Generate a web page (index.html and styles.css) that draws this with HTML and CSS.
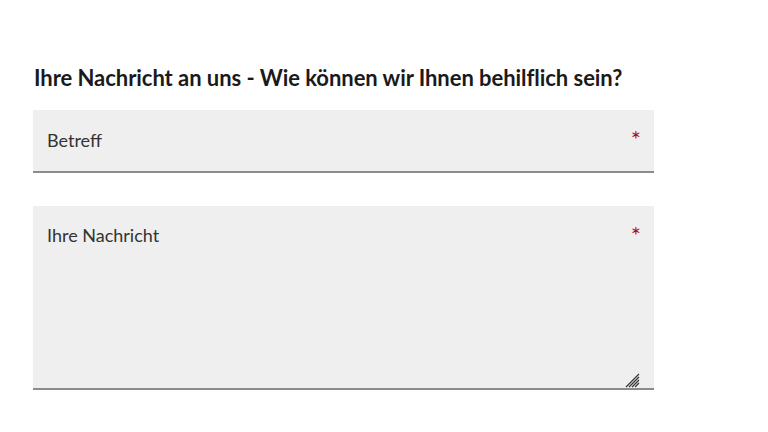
FILE: index.html
```html
<!DOCTYPE html>
<html lang="de">
<head>
  <meta charset="UTF-8" />
  <meta name="viewport" content="width=device-width, initial-scale=1.0" />
  <title>Kontakt</title>
  <link rel="stylesheet" href="styles.css">
</head>
<body>
  <form class="kontakt">
    <h2>Ihre Nachricht an uns - Wie können wir Ihnen behilflich sein?</h2>
    <div class="feld">
      <input type="text" id="betreff" placeholder="Betreff" required />
      <span class="pflicht">*</span>
    </div>
    <div class="feld">
      <textarea id="nachricht" placeholder="Ihre Nachricht" required></textarea>
      <span class="pflicht">*</span>
      <svg class="griff" width="15" height="15" viewBox="0 0 15 15">
        <path d="M1 14 L14 1 M4 14 L14 4 M7 14 L14 7 M10 14 L14 10" stroke="#333" stroke-width="1.2" fill="none" />
      </svg>
    </div>
  </form>
</body>
</html>
```

FILE: styles.css
```css
body {
  margin: 0;
  padding: 66px 0 0 33px;
  font-family: Lato, "Open Sans", sans-serif;
  background: #fff;
  color: #1a1a1a;
}
.kontakt {
  width: 621px;
}
h2 {
  margin: 0 0 20px 1px;
  font-size: 22px;
  font-weight: 700;
  line-height: 24px;
  letter-spacing: -0.05px;
}
.feld {
  position: relative;
  margin-bottom: 33px;
}
input, textarea {
  display: block;
  width: 100%;
  box-sizing: border-box;
  background: #efefef;
  border: none;
  border-bottom: 2px solid #8c8c8c;
  font-family: inherit;
  font-size: 18px;
  color: #333;
  padding: 0 40px 0 14px;
  outline: none;
}
input {
  height: 63px;
  padding-bottom: 2px;
}
textarea {
  height: 184px;
  padding-top: 18px;
  resize: none;
}
::placeholder {
  color: #333;
  opacity: 1;
}
.pflicht {
  position: absolute;
  right: 13px;
  top: 17px;
  color: #9a1529;
  font-size: 24px;
  line-height: 24px;
}
.griff {
  position: absolute;
  right: 14px;
  bottom: 2px;
}
```
